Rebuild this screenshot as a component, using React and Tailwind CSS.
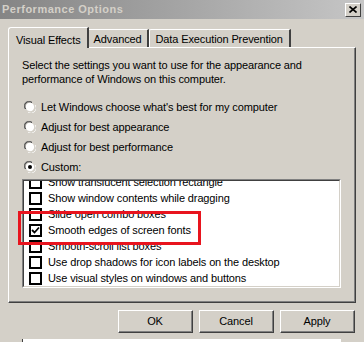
const font = { fontFamily: '"Liberation Sans", Arial, sans-serif' };

function Radio({ checked }) {
  return (
    <svg width="12" height="12" viewBox="0 0 12 12" className="shrink-0">
      <path d="M1 8 A5 5 0 0 1 8 1" fill="none" stroke="#808080" strokeWidth="1" />
      <path d="M2 8 A4 4 0 0 1 8 2" fill="none" stroke="#404040" strokeWidth="1" />
      <circle cx="6" cy="6" r="4.2" fill="#fff" />
      <path d="M4 11 A5 5 0 0 0 11 4" fill="none" stroke="#fff" strokeWidth="1" />
      <path d="M4 10 A4 4 0 0 0 10 4" fill="none" stroke="#d4d0c8" strokeWidth="1" />
      {checked && <circle cx="6" cy="6" r="2" fill="#000" />}
    </svg>
  );
}

function Check({ checked }) {
  return (
    <div className="w-[13px] h-[13px] border-2 border-black bg-white shrink-0 flex items-center justify-center">
      {checked && (
        <svg width="9" height="9" viewBox="0 0 9 9">
          <path d="M1 4 L3.5 6.5 L8 1.5" fill="none" stroke="#000" strokeWidth="1.8" />
        </svg>
      )}
    </div>
  );
}

function Button({ children }) {
  return (
    <div className="w-[75px] h-[23px] border border-t-white border-l-white border-r-[#404040] border-b-[#404040]">
      <div className="w-full h-full border-r border-b border-[#808080] flex items-center justify-center text-[11px] text-black">
        {children}
      </div>
    </div>
  );
}

export default function App() {
  const options = [
    { label: "Let Windows choose what's best for my computer" },
    { label: 'Adjust for best appearance' },
    { label: 'Adjust for best performance' },
    { label: 'Custom:', checked: true },
  ];

  const items = [
    { label: 'Show translucent selection rectangle' },
    { label: 'Show window contents while dragging' },
    { label: 'Slide open combo boxes' },
    { label: 'Smooth edges of screen fonts', checked: true },
    { label: 'Smooth-scroll list boxes' },
    { label: 'Use drop shadows for icon labels on the desktop' },
    { label: 'Use visual styles on windows and buttons' },
  ];

  return (
    <div className="w-[364px] h-[342px] bg-[#d4d0c8] overflow-hidden relative tracking-[-0.12px]" style={font}>
      {/* Title bar */}
      <div className="h-[19px] flex items-center justify-between pl-[2px] pr-[3px] bg-gradient-to-r from-[#858585] to-[#c6c6c6]">
        <span className="text-[11px] font-bold text-[#d4d0c8] leading-none tracking-[0.5px]">Performance Options</span>
        <div className="w-[16px] h-[14px] bg-[#d4d0c8] border border-t-white border-l-white border-r-[#404040] border-b-[#404040] flex items-center justify-center">
          <svg width="8" height="7" viewBox="0 0 8 7">
            <path d="M0.5 0.5 L7.5 6.5 M7.5 0.5 L0.5 6.5" stroke="#000" strokeWidth="1.6" />
          </svg>
        </div>
      </div>

      <div className="pl-[8px] pr-[8px] pt-[8px]">
        {/* Tabs */}
        <div className="flex items-end h-[20px] relative z-10 text-[11px] text-black">
          <div className="h-[21px] -mb-[1px] pl-[7px] pr-[6px] flex items-start pt-[4px] bg-[#d4d0c8] border-t border-l border-white rounded-tl-[3px] border-r-2 border-r-[#404040]">
            Visual Effects
          </div>
          <div className="h-[18px] pl-[5px] pr-[5px] flex items-center pt-[2px] border-t border-white border-r-2 border-r-[#404040]">
            Advanced
          </div>
          <div className="h-[18px] pl-[6px] pr-[6px] flex items-center pt-[2px] border-t border-l border-white rounded-tl-[2px] border-r-2 border-r-[#404040]">
            Data Execution Prevention
          </div>
        </div>

        {/* Panel */}
        <div className="w-[348px] h-[256px] border border-t-white border-l-white border-r-[#404040] border-b-[#404040]">
          <div className="h-full border-r border-b border-[#808080] pl-[13px] pr-[12px] pt-[10px] text-[11px] text-black">
            <p className="leading-[14px]">
              Select the settings you want to use for the appearance and
              <br />
              performance of Windows on this computer.
            </p>

            <div className="mt-[11px] flex flex-col">
              {options.map((o) => (
                <div key={o.label} className="h-[20px] flex items-center gap-[5px] pl-[2px]">
                  <Radio checked={o.checked} />
                  <span>{o.label}</span>
                </div>
              ))}
            </div>

            {/* List */}
            <div className="mt-[2px] w-[319px] h-[109px] border border-t-[#808080] border-l-[#808080] border-r-white border-b-white">
              <div className="h-full border border-t-[#404040] border-l-[#404040] border-r-[#d4d0c8] border-b-[#d4d0c8] bg-white overflow-hidden">
                <div className="-mt-[7px]">
                  {items.map((it) => (
                    <div key={it.label} className="h-[16px] flex items-center gap-[6px] pl-[5px]">
                      <Check checked={it.checked} />
                      <span className="whitespace-nowrap">{it.label}</span>
                    </div>
                  ))}
                </div>
              </div>
            </div>
          </div>
        </div>

        {/* Buttons */}
        <div className="mt-[7px] flex justify-end gap-[6px] pr-[1px]">
          <Button>OK</Button>
          <Button>Cancel</Button>
          <Button>Apply</Button>
        </div>

        {/* next item peeking at the bottom */}
        <div className="mt-[6px] ml-[14px] w-[319px] h-[10px] bg-white border-l border-[#404040]" />
      </div>

      {/* Red annotation box */}
      <div className="absolute left-[18px] top-[211px] w-[183px] h-[34px] border-[3px] border-[#e8141e]" />
    </div>
  );
}
